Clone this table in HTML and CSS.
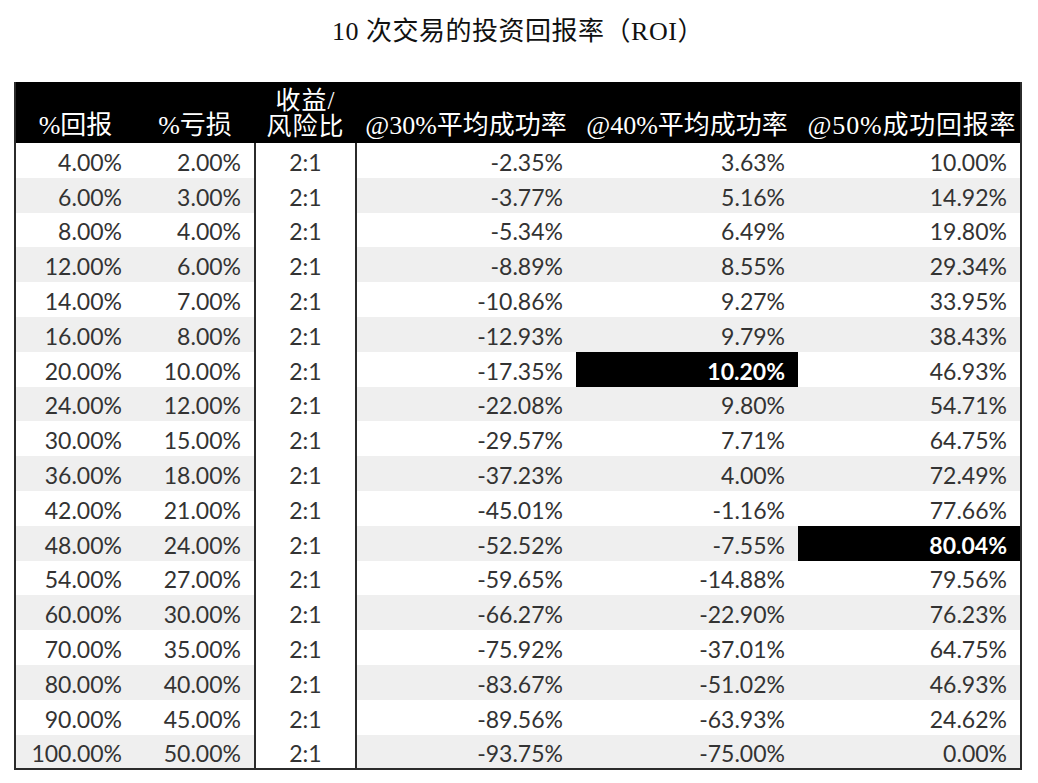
FILE: index.html
```html
<!DOCTYPE html>
<html lang="zh">
<head>
<meta charset="utf-8">
<link rel="stylesheet" href="styles.css">
</head>
<body>
<h1 class="title">10 次交易的投资回报率（ROI）</h1>
<table class="roi">
  <colgroup>
    <col class="c1"><col class="c2"><col class="c3"><col class="c4"><col class="c5"><col class="c6">
  </colgroup>
  <thead>
    <tr>
      <th>%回报</th>
      <th>%亏损</th>
      <th class="ratio-h">收益/<br>风险比</th>
      <th>@30%平均成功率</th>
      <th>@40%平均成功率</th>
      <th class="wide">@50%成功回报率</th>
    </tr>
  </thead>
  <tbody>
    <tr><td>4.00%</td><td>2.00%</td><td class="ratio">2:1</td><td>-2.35%</td><td>3.63%</td><td>10.00%</td></tr>
    <tr><td>6.00%</td><td>3.00%</td><td class="ratio">2:1</td><td>-3.77%</td><td>5.16%</td><td>14.92%</td></tr>
    <tr><td>8.00%</td><td>4.00%</td><td class="ratio">2:1</td><td>-5.34%</td><td>6.49%</td><td>19.80%</td></tr>
    <tr><td>12.00%</td><td>6.00%</td><td class="ratio">2:1</td><td>-8.89%</td><td>8.55%</td><td>29.34%</td></tr>
    <tr><td>14.00%</td><td>7.00%</td><td class="ratio">2:1</td><td>-10.86%</td><td>9.27%</td><td>33.95%</td></tr>
    <tr><td>16.00%</td><td>8.00%</td><td class="ratio">2:1</td><td>-12.93%</td><td>9.79%</td><td>38.43%</td></tr>
    <tr><td>20.00%</td><td>10.00%</td><td class="ratio">2:1</td><td>-17.35%</td><td class="best">10.20%</td><td>46.93%</td></tr>
    <tr><td>24.00%</td><td>12.00%</td><td class="ratio">2:1</td><td>-22.08%</td><td>9.80%</td><td>54.71%</td></tr>
    <tr><td>30.00%</td><td>15.00%</td><td class="ratio">2:1</td><td>-29.57%</td><td>7.71%</td><td>64.75%</td></tr>
    <tr><td>36.00%</td><td>18.00%</td><td class="ratio">2:1</td><td>-37.23%</td><td>4.00%</td><td>72.49%</td></tr>
    <tr><td>42.00%</td><td>21.00%</td><td class="ratio">2:1</td><td>-45.01%</td><td>-1.16%</td><td>77.66%</td></tr>
    <tr><td>48.00%</td><td>24.00%</td><td class="ratio">2:1</td><td>-52.52%</td><td>-7.55%</td><td class="best">80.04%</td></tr>
    <tr><td>54.00%</td><td>27.00%</td><td class="ratio">2:1</td><td>-59.65%</td><td>-14.88%</td><td>79.56%</td></tr>
    <tr><td>60.00%</td><td>30.00%</td><td class="ratio">2:1</td><td>-66.27%</td><td>-22.90%</td><td>76.23%</td></tr>
    <tr><td>70.00%</td><td>35.00%</td><td class="ratio">2:1</td><td>-75.92%</td><td>-37.01%</td><td>64.75%</td></tr>
    <tr><td>80.00%</td><td>40.00%</td><td class="ratio">2:1</td><td>-83.67%</td><td>-51.02%</td><td>46.93%</td></tr>
    <tr><td>90.00%</td><td>45.00%</td><td class="ratio">2:1</td><td>-89.56%</td><td>-63.93%</td><td>24.62%</td></tr>
    <tr><td>100.00%</td><td>50.00%</td><td class="ratio">2:1</td><td>-93.75%</td><td>-75.00%</td><td>0.00%</td></tr>
  </tbody>
</table>
</body>
</html>
```

FILE: styles.css
```css
html, body {
  margin: 0;
  padding: 0;
  background: #ffffff;
}

.title {
  margin: 0;
  height: 82px;
  box-sizing: border-box;
  padding-top: 15px;
  padding-right: 2px;
  text-align: center;
  font-family: "Liberation Serif", "Noto Sans CJK SC", serif;
  font-weight: 400;
  font-size: 26px;
  line-height: 34px;
  letter-spacing: 0.5px;
  color: #111;
}

.roi {
  margin-left: 14px;
  width: 1006px;
  border-collapse: collapse;
  table-layout: fixed;
  border-left: 2px solid #2b2b2b;
  border-right: 2px solid #2b2b2b;
  border-bottom: 2px solid #2b2b2b;
}

.c1 { width: 120px; }
.c2 { width: 120px; }
.c3 { width: 101px; }
.c4 { width: 220px; }
.c5 { width: 222px; }
.c6 { width: 223px; }

.roi thead th {
  background: #000;
  color: #fff;
  height: 61px;
  padding: 0 0 4px 0;
  vertical-align: bottom;
  text-align: center;
  font-family: "Liberation Serif", "Noto Sans CJK SC", serif;
  font-weight: 400;
  font-size: 26px;
  line-height: 27px;
  white-space: nowrap;
  box-sizing: border-box;
}

.roi thead th.wide {
  letter-spacing: 0.8px;
  padding-left: 6px;
}

.roi thead th.ratio-h {
  font-size: 25px;
  line-height: 26px;
  letter-spacing: 1px;
  padding-bottom: 3px;
}

.roi tbody td {
  height: 34.8px;
  padding: 3px 13px 0 0;
  box-sizing: border-box;
  text-align: right;
  font-family: Lato, "Open Sans", sans-serif;
  font-size: 23px;
  line-height: 30px;
  color: #333333;
  white-space: nowrap;
}

.roi tbody tr:nth-child(even) td {
  background: #efefef;
}

.roi tbody td.ratio,
.roi tbody tr:nth-child(even) td.ratio {
  background: #fff;
  text-align: center;
  padding-right: 0;
  border-left: 2px solid #2b2b2b;
  border-right: 2px solid #2b2b2b;
}

.roi tbody td.best,
.roi tbody tr:nth-child(even) td.best {
  background: #000;
  color: #fff;
  font-weight: 700;
}
```
